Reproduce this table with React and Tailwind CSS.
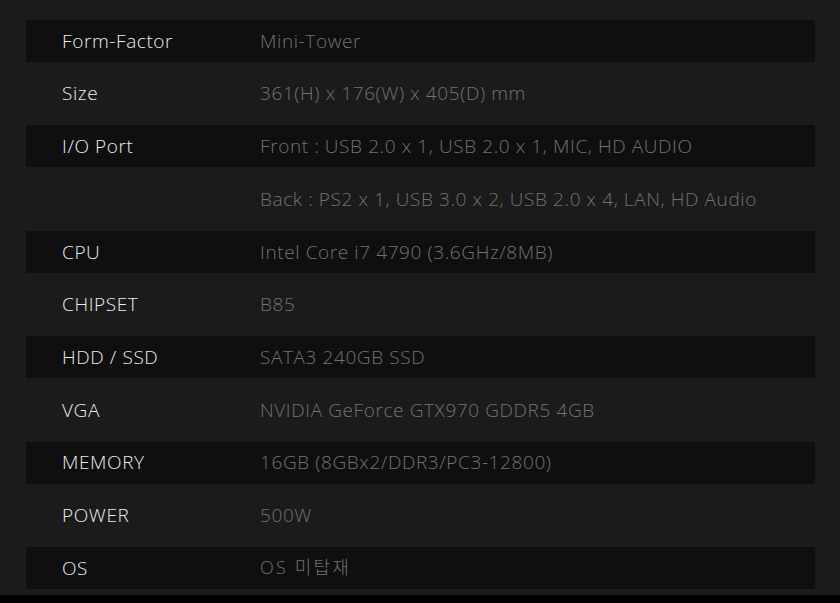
const specs = [
  { label: 'Form-Factor', value: 'Mini-Tower' },
  { label: 'Size', value: '361(H) x 176(W) x 405(D) mm' },
  { label: 'I/O Port', value: 'Front : USB 2.0 x 1, USB 2.0 x 1, MIC, HD AUDIO' },
  { label: '', value: 'Back : PS2 x 1, USB 3.0 x 2, USB 2.0 x 4, LAN, HD Audio' },
  { label: 'CPU', value: 'Intel Core i7 4790 (3.6GHz/8MB)' },
  { label: 'CHIPSET', value: 'B85' },
  { label: 'HDD / SSD', value: 'SATA3 240GB SSD' },
  { label: 'VGA', value: 'NVIDIA GeForce GTX970 GDDR5 4GB' },
  { label: 'MEMORY', value: '16GB (8GBx2/DDR3/PC3-12800)' },
  { label: 'POWER', value: '500W' },
  { label: 'OS', value: 'OS 미탑재', wide: true },
]

function App() {
  return (
    <div className="min-h-screen bg-black">
      <div
        className="h-[595px] bg-[#1b1b1b] pt-5 pl-[26px] pr-[25px]"
        style={{ fontFamily: '"Open Sans", "Noto Sans CJK KR", sans-serif' }}
      >
        {specs.map((row, i) => (
          <div
            key={i}
            className={`flex items-center text-[19px] font-light tracking-[0.6px] ${
              i % 2 === 0 ? 'h-[42px] bg-[#0f0f0f]' : 'h-[63.4px]'
            }`}
          >
            <div className="w-[234px] pl-9 text-[#ececec]">{row.label}</div>
            <div className={`text-[#727272] ${row.wide ? 'text-[18px] tracking-[0.12em]' : ''}`}>
              {row.value}
            </div>
          </div>
        ))}
      </div>
    </div>
  )
}

export default App
